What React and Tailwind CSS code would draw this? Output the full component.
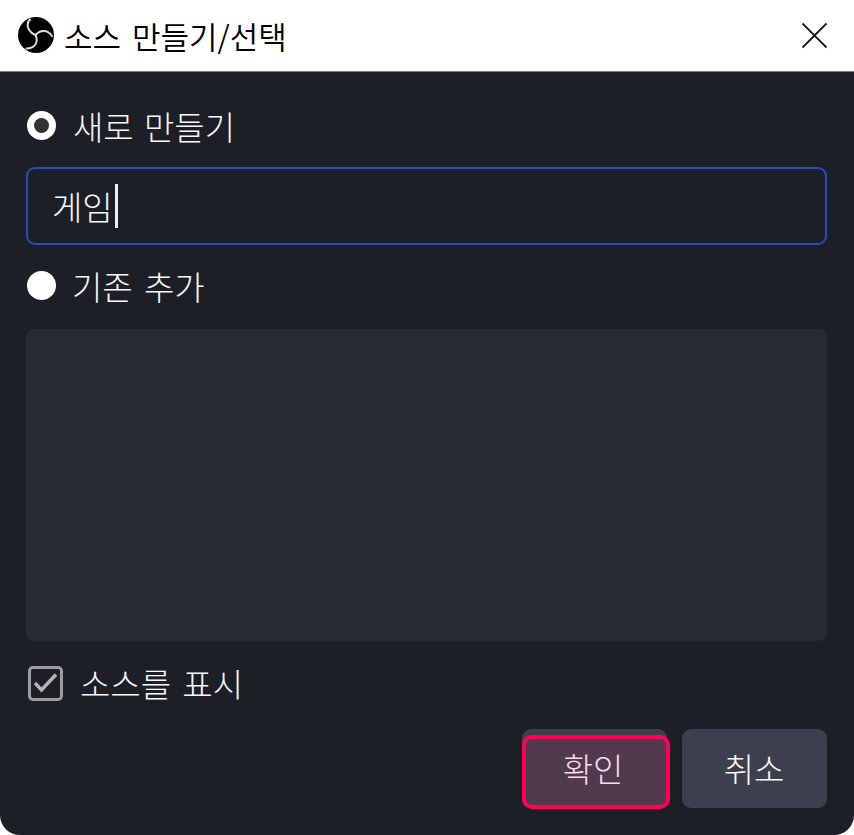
import React, { useState } from 'react';

const ObsLogo = () => (
  <svg width="36" height="36" viewBox="0 0 36 36" fill="none">
    <circle cx="18" cy="18" r="18" fill="#000" />
    <g stroke="#dcdcdc" strokeWidth="2" strokeLinecap="round">
      <path d="M12 2.500C7.500 7 9.500 14.500 17.500 18" />
      <path d="M17.500 18C22 12.800 29.500 12 34 19" />
      <path d="M17.500 18C20.500 24.500 17.500 31.500 8.500 31.500" />
    </g>
  </svg>
);

const Radio = ({ checked, onClick }) => (
  <button
    onClick={onClick}
    className="mb-[2px] flex size-[29px] items-center justify-center rounded-full bg-white"
  >
    {checked && <span className="size-[15px] rounded-full bg-[#333]" />}
  </button>
);

const App = () => {
  const [mode, setMode] = useState('new');
  const [visible, setVisible] = useState(true);

  return (
    <div className="h-[835px] w-[854px] bg-white font-['Noto_Sans_CJK_KR',sans-serif]">
      <div className="flex h-full flex-col overflow-hidden rounded-b-[20px] bg-[#1d1f27]">
        {/* Title bar */}
        <header className="flex h-[72px] shrink-0 items-center border-b border-[#808185] bg-white pr-[26px] pb-[1px] pl-[18px]">
          <ObsLogo />
          <h1 className="ml-[10px] text-[31px] leading-none font-[350] whitespace-nowrap text-black [word-spacing:4px]">
            소스 만들기/선택
          </h1>
          <button className="ml-auto">
            <svg width="27" height="27" viewBox="0 0 27 27" stroke="#1b1b1f" strokeWidth="1.8">
              <path d="M1.500 1.500l24 24M25.500 1.500l-24 24" />
            </svg>
          </button>
        </header>

        <main className="flex flex-1 flex-col pr-[27px] pl-[26px] font-light text-[#f8f8f8]">
          <div className="mt-[32px] flex h-[44px] items-center gap-[17px] pl-[1px]">
            <Radio checked={mode === 'new'} onClick={() => setMode('new')} />
            <span className="text-[33px] leading-none [word-spacing:3px]">새로 만들기</span>
          </div>

          <div className="mt-[19px] flex h-[78px] items-center rounded-[9px] border-2 border-[#284cb8] pl-[24px]">
            <span className="text-[33px] leading-none">게임</span>
            <span className="ml-[2px] h-[44px] w-[3px] bg-[#f0f0f0]" />
          </div>

          <div className="mt-[19px] flex h-[44px] items-center gap-[16px] pl-[1px]">
            <Radio checked={mode === 'existing'} onClick={() => setMode('existing')} />
            <span className="text-[33px] leading-none [word-spacing:4px]">기존 추가</span>
          </div>

          <div className="mt-[21px] h-[312px] rounded-[8px] bg-[#272a33]" />

          <div className="mt-[20px] flex h-[44px] items-center gap-[17px] pl-[2px]">
            <button
              onClick={() => setVisible(!visible)}
              className="flex size-[35px] items-center justify-center rounded-[5px] border-[3px] border-[#9d9ca0]"
            >
              {visible && (
                <svg width="25" height="22" viewBox="0 0 25 22" fill="none" stroke="#b5b3b7" strokeWidth="3.500">
                  <path d="M2 11l6.500 7L23 2.500" />
                </svg>
              )}
            </button>
            <span className="text-[33px] leading-none [word-spacing:4px]">소스를 표시</span>
          </div>

          <footer className="mt-[24px] flex justify-end gap-[15px]">
            <button className="relative h-[79px] w-[145px] rounded-[9px] bg-[#3c404d] pr-[3px] text-[33px] leading-none">
              확인
              {/* Click highlight */}
              <span className="absolute top-[6px] left-0 h-[74px] w-[148px] rounded-[10px] border-4 border-[#ff0055] bg-[#ff0055]/11" />
            </button>
            <button className="h-[79px] w-[145px] rounded-[9px] bg-[#3c404d] pr-[1px] text-[33px] leading-none">
              취소
            </button>
          </footer>
        </main>
      </div>
    </div>
  );
};

export default App;
